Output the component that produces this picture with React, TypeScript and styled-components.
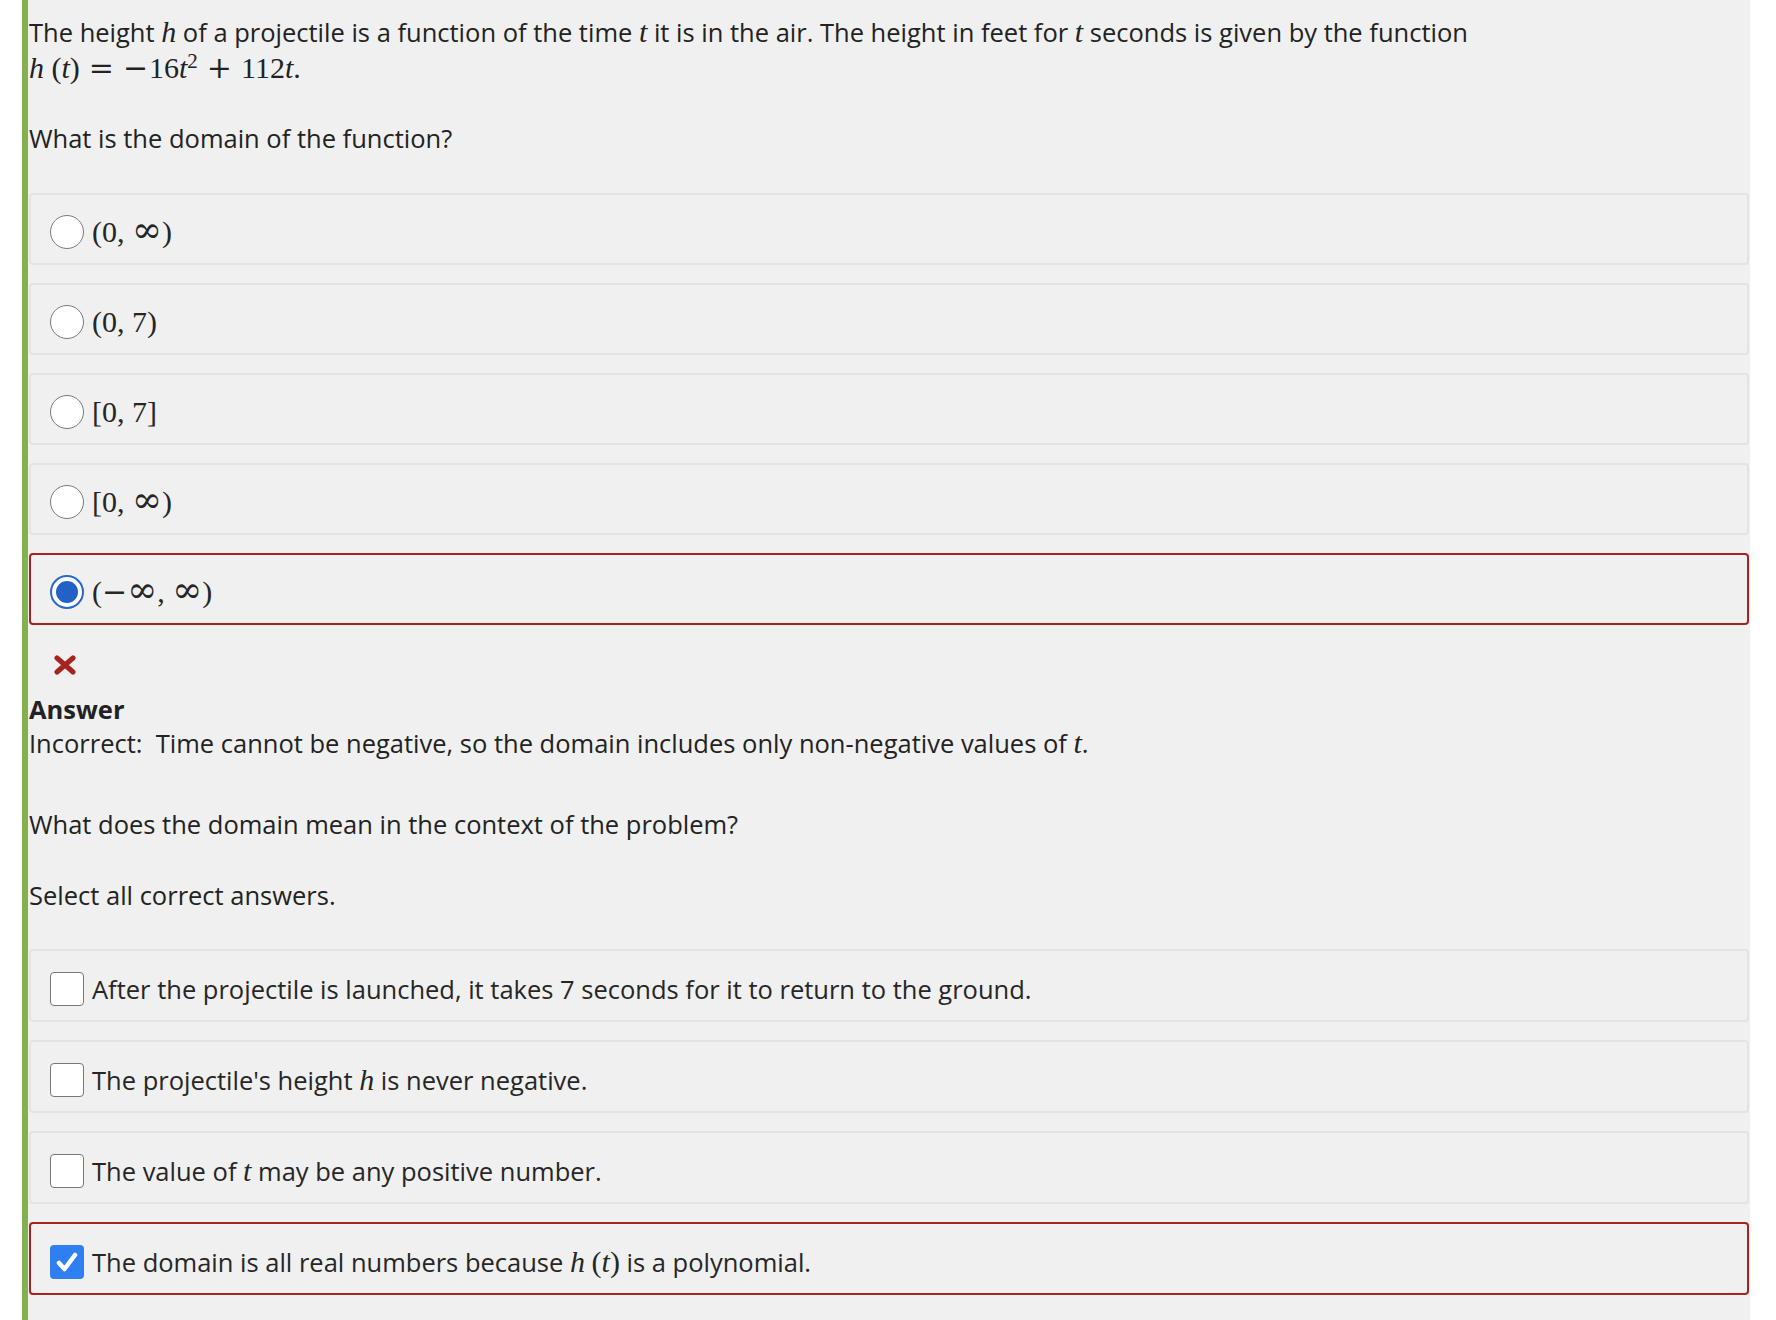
import React from 'react';
import styled, { createGlobalStyle } from 'styled-components';

const GlobalStyle = createGlobalStyle`
  html, body {
    margin: 0;
    padding: 0;
    background: #ffffff;
  }
  body {
    font-family: 'Open Sans', 'Liberation Sans', sans-serif;
    color: #222222;
  }
`;

const Panel = styled.div`
  margin-left: 22px;
  width: 1728px;
  min-height: 1320px;
  box-sizing: border-box;
  border-left: 6px solid #84b14f;
  background: #f0f0f0;
  padding: 14px 1px 40px 1px;
`;

const Para = styled.p<{ $top?: number; $lh?: number }>`
  margin: ${({ $top }) => $top ?? 0}px 0 0;
  font-size: 25.5px;
  line-height: ${({ $lh }) => $lh ?? 36}px;
`;

const Bold = styled.span`
  display: block;
  font-weight: 700;
`;

const MathSpan = styled.span`
  font-family: 'Liberation Serif', 'Times New Roman', serif;
  font-size: 30px;
  font-style: normal;
  white-space: nowrap;
`;

const V = styled.i`
  font-family: 'Liberation Serif', 'Times New Roman', serif;
  font-size: 30px;
  font-style: italic;
`;

// operators and infinity drawn from DejaVu Serif, whose glyphs are wider like TeX's
const Op = styled.span<{ $l?: number; $r?: number }>`
  font-family: 'DejaVu Serif', 'Liberation Serif', serif;
  margin-left: ${({ $l }) => $l ?? 0}em;
  margin-right: ${({ $r }) => $r ?? 0}em;
`;

const Sup = styled.sup`
  font-size: 0.7em;
  vertical-align: 0.5em;
  line-height: 0;
`;

const Inf = styled.span`
  font-family: 'DejaVu Serif', 'Liberation Serif', serif;
  font-size: 1.2em;
  line-height: 0;
`;

const ChoiceList = styled.div<{ $top: number; $gap: number }>`
  display: flex;
  flex-direction: column;
  gap: ${({ $gap }) => $gap}px;
  margin-top: ${({ $top }) => $top}px;
`;

const Choice = styled.label<{ $wrong?: boolean; $h: number }>`
  display: flex;
  align-items: center;
  gap: 8px;
  box-sizing: border-box;
  height: ${({ $h }) => $h}px;
  padding: 6px 19px 0;
  border: 2px solid ${({ $wrong }) => ($wrong ? '#a6241f' : '#e3e3e3')};
  border-radius: 4px;
`;

const Radio = styled.span<{ $checked?: boolean }>`
  flex: none;
  width: 34px;
  height: 34px;
  box-sizing: border-box;
  border-radius: 50%;
  background: #ffffff;
  border: ${({ $checked }) => ($checked ? '2px solid #2a66cc' : '1.5px solid #7a7a7a')};
  display: flex;
  align-items: center;
  justify-content: center;

  &::after {
    content: '';
    display: ${({ $checked }) => ($checked ? 'block' : 'none')};
    width: 22px;
    height: 22px;
    border-radius: 50%;
    background: #2461c6;
  }
`;

const Box = styled.span<{ $checked?: boolean }>`
  flex: none;
  width: 34px;
  height: 34px;
  box-sizing: border-box;
  border-radius: 4px;
  background: ${({ $checked }) => ($checked ? '#2f7ff3' : '#ffffff')};
  border: ${({ $checked }) => ($checked ? 'none' : '1.5px solid #777777')};
  display: flex;
  align-items: center;
  justify-content: center;
`;

const MathLabel = styled.span`
  font-family: 'Liberation Serif', 'Times New Roman', serif;
  font-size: 30px;
  line-height: 36px;
  color: #262626;
`;

const TextLabel = styled.span`
  font-size: 25.5px;
  line-height: 36px;
  color: #262626;
`;

const Feedback = styled.div`
  margin-top: 30px;
`;

const XMark = styled.div`
  margin-left: 25px;
  height: 20px;
  margin-bottom: 17px;

  svg {
    display: block;
  }
`;

const radioChoices: { label: React.ReactNode; checked?: boolean }[] = [
  { label: <>(0, <Inf>∞</Inf>)</> },
  { label: <>(0, 7)</> },
  { label: <>[0, 7]</> },
  { label: <>[0, <Inf>∞</Inf>)</> },
  { label: <>(<Op>−</Op><Inf>∞</Inf>, <Inf>∞</Inf>)</>, checked: true },
];

const checkChoices: { label: React.ReactNode; checked?: boolean }[] = [
  { label: <>After the projectile is launched, it takes 7 seconds for it to return to the ground.</> },
  { label: <>The projectile's height <V>h</V> is never negative.</> },
  { label: <>The value of <V>t</V> may be any positive number.</> },
  {
    label: (
      <>
        The domain is all real numbers because <V>h</V> <MathSpan>(<V>t</V>)</MathSpan> is a polynomial.
      </>
    ),
    checked: true,
  },
];

const App: React.FC = () => {
  return (
    <>
      <GlobalStyle />
      <Panel>
        <Para>
          The height <V>h</V> of a projectile is a function of the time <V>t</V> it is in the air. The
          height in feet for <V>t</V> seconds is given by the function
          <br />
          <MathSpan>
            <V>h</V>
            <span style={{ marginLeft: '0.25em' }}>(</span>
            <V>t</V>)<Op $l={0.3} $r={0.3}>=</Op>
            <Op $r={0.03}>−</Op>16<V>t</V>
            <Sup>2</Sup>
            <Op $l={0.3} $r={0.3}>+</Op>112<V>t</V>.
          </MathSpan>
        </Para>

        <Para $top={34}>What is the domain of the function?</Para>

        <ChoiceList $top={37} $gap={18}>
          {radioChoices.map((c, i) => (
            <Choice key={i} $h={72} $wrong={c.checked}>
              <Radio $checked={c.checked} />
              <MathLabel>{c.label}</MathLabel>
            </Choice>
          ))}
        </ChoiceList>

        <Feedback>
          <XMark>
            <svg width="22" height="20" viewBox="0 0 22 20">
              <path
                d="M3 3 L19 17 M19 3 L3 17"
                stroke="#a6241f"
                strokeWidth="5"
                strokeLinecap="round"
                fill="none"
              />
            </svg>
          </XMark>
          <Para $lh={34}>
            <Bold>Answer</Bold>
            Incorrect:&nbsp; Time cannot be negative, so the domain includes only non-negative values of{' '}
            <V>t</V>.
          </Para>
        </Feedback>

        <Para $top={46}>What does the domain mean in the context of the problem?</Para>
        <Para $top={35}>Select all correct answers.</Para>

        <ChoiceList $top={36} $gap={18}>
          {checkChoices.map((c, i) => (
            <Choice key={i} $h={73} $wrong={c.checked}>
              <Box $checked={c.checked}>
                {c.checked && (
                  <svg width="34" height="34" viewBox="0 0 34 34">
                    <path
                      d="M9 18 L14.5 24 L25 10"
                      stroke="#ffffff"
                      strokeWidth="4.5"
                      strokeLinecap="round"
                      strokeLinejoin="round"
                      fill="none"
                    />
                  </svg>
                )}
              </Box>
              <TextLabel>{c.label}</TextLabel>
            </Choice>
          ))}
        </ChoiceList>
      </Panel>
    </>
  );
};

export default App;
